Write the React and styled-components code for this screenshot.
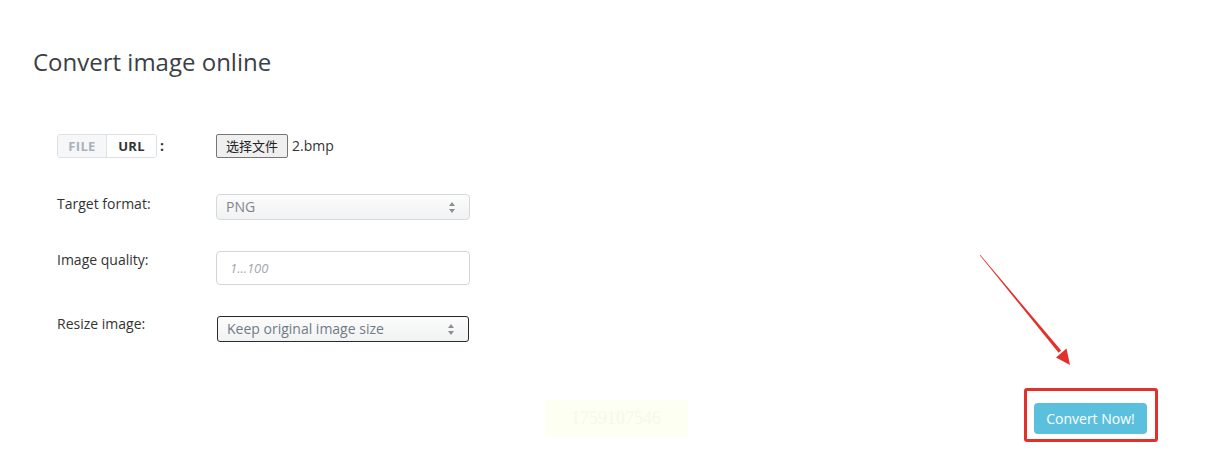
import styled, { createGlobalStyle } from 'styled-components'

const Global = createGlobalStyle`
  body {
    margin: 0;
    background: #fff;
    font-family: "Open Sans", "Noto Sans", sans-serif;
    color: #333;
  }
`

const Page = styled.div`
  position: relative;
  width: 1232px;
  height: 470px;
  overflow: hidden;
`

const Title = styled.h1`
  margin: 48px 0 0 33px;
  font-size: 24px;
  line-height: 28.8px;
  font-weight: 400;
  color: #3b4046;
`

const Form = styled.div`
  margin: 57px 0 0 57px;
  display: grid;
  grid-template-columns: 159px 254px;
  row-gap: 31px;
  align-items: start;
`

const Label = styled.div`
  font-size: 14px;
  line-height: 20px;
  margin-top: ${p => p.$offset || 0}px;
  color: #333;
`

const SourceCell = styled.div`
  display: flex;
  align-items: center;
  margin-bottom: 5px;
`

const Toggle = styled.div`
  display: flex;
  border: 1px solid #dde1e5;
  border-radius: 3px;
  overflow: hidden;
  height: 22px;
`

const ToggleItem = styled.span`
  width: ${p => p.$w}px;
  display: flex;
  align-items: center;
  justify-content: center;
  font-size: 13px;
  font-weight: 700;
  letter-spacing: 0.3px;
  color: ${p => (p.$active ? '#333' : '#a9b2bc')};
  background: ${p => (p.$active ? '#fff' : '#f5f7f9')};
  & + & {
    border-left: 1px solid #dde1e5;
  }
`

const Colon = styled.span`
  margin-left: 3px;
  font-weight: 700;
  font-size: 14px;
`

const FileCell = styled.div`
  display: flex;
  align-items: center;
  height: 24px;
`

const FileButton = styled.button`
  height: 24px;
  width: 72px;
  padding: 0;
  border: 1px solid #767676;
  border-radius: 2px;
  background: #efefef;
  font-family: "Noto Sans CJK SC", sans-serif;
  font-size: 13px;
  color: #222;
`

const FileName = styled.span`
  margin-left: 4px;
  font-size: 14px;
  color: #333;
`

const SelectWrap = styled.div`
  position: relative;
  width: ${p => (p.$dark ? 252 : 254)}px;
  margin-left: ${p => (p.$dark ? 1 : 0)}px;
`

const Select = styled.select`
  appearance: none;
  width: 100%;
  height: 26px;
  padding: 0 0 0 9px;
  font-family: "Open Sans", sans-serif;
  font-size: 14px;
  color: ${p => (p.$dark ? '#707b86' : '#80868c')};
  border: 1px solid ${p => (p.$dark ? '#2a2a2a' : '#d6d9dc')};
  border-radius: ${p => (p.$dark ? 3 : 4)}px;
  background: linear-gradient(#fcfcfc, #f1f2f3);
  outline: none;
`

const Arrows = styled.svg`
  position: absolute;
  right: 14px;
  top: 8px;
  pointer-events: none;
`

const Input = styled.input`
  box-sizing: border-box;
  width: 254px;
  height: 34px;
  padding: 0 13px;
  border: 1px solid #d3d6d9;
  border-radius: 4px;
  font-family: "Open Sans", sans-serif;
  font-size: 13px;
  outline: none;
  &::placeholder {
    font-style: italic;
    color: #a3a8ad;
  }
`

const Footer = styled.div`
  margin-top: 46px;
  display: grid;
  grid-template-columns: 1fr auto 1fr;
  align-items: start;
`

const Stamp = styled.div`
  grid-column: 2;
  margin-top: 12px;
  width: 143px;
  height: 37px;
  background: #fdfff2;
  color: #f6f8ea;
  font-family: "Liberation Serif", serif;
  font-size: 18px;
  display: flex;
  align-items: center;
  justify-content: center;
`

const Highlight = styled.div`
  grid-column: 3;
  justify-self: end;
  margin-right: 74px;
  border: 3px solid #e2302b;
  border-radius: 3px;
  padding: 12px 8px 5px 7px;
`

const ConvertButton = styled.button`
  height: 31px;
  width: 113px;
  border: none;
  border-radius: 4px;
  background: #5bc0de;
  color: #fff;
  font-family: "Open Sans", sans-serif;
  font-size: 14px;
`

const Overlay = styled.svg`
  position: absolute;
  left: 0;
  top: 0;
  pointer-events: none;
`

const UpDown = () => (
  <Arrows width="8" height="11" viewBox="0 0 8 11">
    <path d="M4 0 L7 4 H1 Z" fill="#8a8f94" />
    <path d="M4 11 L7 7 H1 Z" fill="#8a8f94" />
  </Arrows>
)

const App = () => {
  return (
    <Page>
      <Global />
      <Title>Convert image online</Title>
      <Form>
        <SourceCell>
          <Toggle>
            <ToggleItem $w={48}>FILE</ToggleItem>
            <ToggleItem $w={49} $active>URL</ToggleItem>
          </Toggle>
          <Colon>:</Colon>
        </SourceCell>
        <FileCell>
          <FileButton>选择文件</FileButton>
          <FileName>2.bmp</FileName>
        </FileCell>

        <Label>Target format:</Label>
        <SelectWrap>
          <Select defaultValue="png">
            <option value="png">PNG</option>
          </Select>
          <UpDown />
        </SelectWrap>

        <Label $offset={-1}>Image quality:</Label>
        <Input placeholder="1...100" />

        <Label $offset={-2}>Resize image:</Label>
        <SelectWrap $dark>
          <Select $dark defaultValue="keep">
            <option value="keep">Keep original image size</option>
          </Select>
          <UpDown />
        </SelectWrap>
      </Form>

      <Footer>
        <Stamp>1759107546</Stamp>
        <Highlight>
          <ConvertButton>Convert Now!</ConvertButton>
        </Highlight>
      </Footer>

      <Overlay width="1232" height="470">
        <polygon points="979.8,255.2 980.2,254.8 1061.2,350.6 1058.6,352.8" fill="#e2302b" />
        <polygon points="1070,365 1056,357.5 1066.5,348.5" fill="#e2302b" />
      </Overlay>
    </Page>
  )
}

export default App
